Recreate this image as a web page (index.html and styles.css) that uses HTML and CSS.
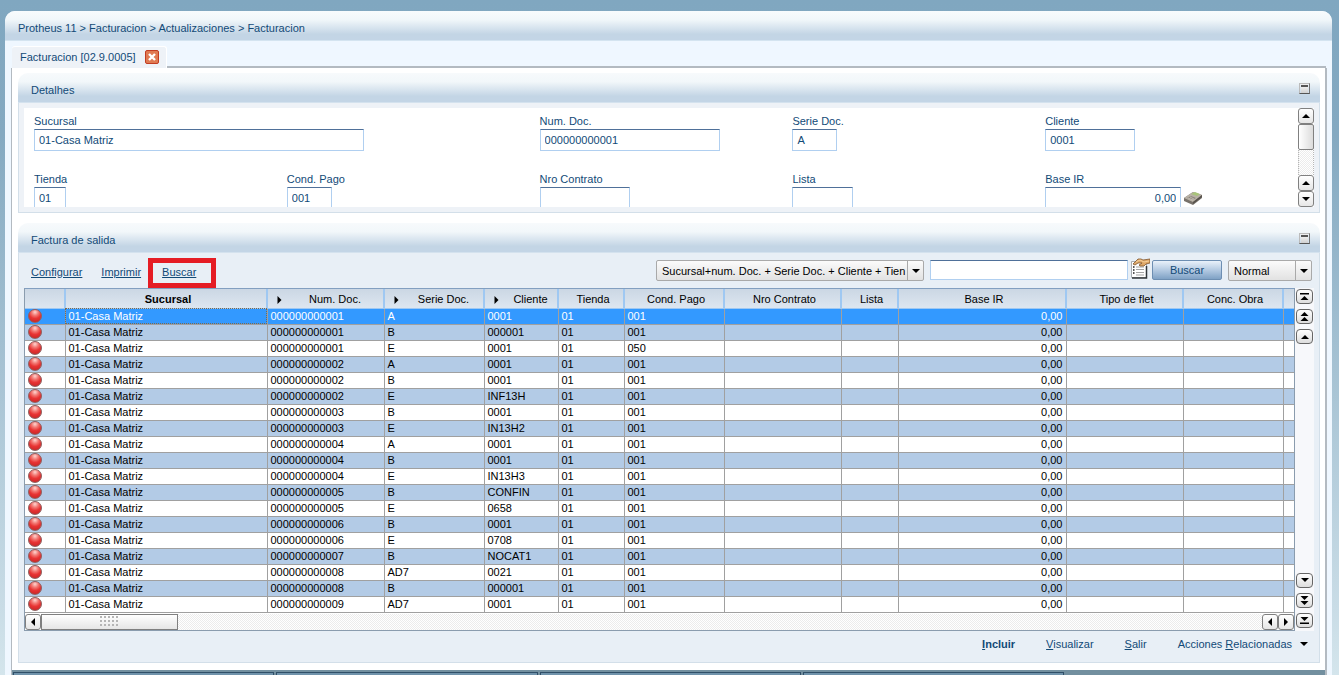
FILE: index.html
```
<!DOCTYPE html>
<html lang="es">
<head>
<meta charset="utf-8">
<title>Protheus 11 - Facturacion</title>
<link rel="stylesheet" href="styles.css">
</head>
<body>
<svg class="defs" aria-hidden="true">
  <symbol id="up" viewBox="0 0 8 4"><path d="M4 0L8 4H0z"/></symbol>
  <symbol id="down" viewBox="0 0 8 4"><path d="M0 0h8L4 4z"/></symbol>
  <symbol id="left" viewBox="0 0 4 8"><path d="M4 0v8L0 4z"/></symbol>
  <symbol id="right" viewBox="0 0 4 8"><path d="M0 0l4 4-4 4z"/></symbol>
</svg>
<div class="window">
  <header class="titlebar">Protheus 11 &gt; Facturacion &gt; Actualizaciones &gt; Facturacion</header>
  <div class="tabs">
    <div class="tab"><span>Facturacion [02.9.0005]</span>
      <button class="close" aria-label="Cerrar"><svg width="8" height="8" viewBox="0 0 8 8"><path d="M1 1l6 6M7 1L1 7" stroke="#fff" stroke-width="2.4"/></svg></button>
    </div>
    <div class="tab-line"></div>
  </div>
  <main class="content">
    <section class="panel">
      <div class="panel-head"><h2>Detalhes</h2><button class="minimize" aria-label="Minimizar"></button></div>
      <div class="panel-body">
        <div class="details">
          <form class="fields">
            <div class="field wide"><label for="sucursal">Sucursal</label><input id="sucursal" class="w330" value="01-Casa Matriz"></div>
            <div class="field"><label for="numdoc">Num. Doc.</label><input id="numdoc" class="w180" value="000000000001"></div>
            <div class="field"><label for="serie">Serie Doc.</label><input id="serie" class="w45" value="A"></div>
            <div class="field"><label for="cliente">Cliente</label><input id="cliente" class="w90" value="0001"></div>
            <div class="field"><label for="tienda">Tienda</label><input id="tienda" class="w32" value="01"></div>
            <div class="field"><label for="pago">Cond. Pago</label><input id="pago" class="w45" value="001"></div>
            <div class="field"><label for="contrato">Nro Contrato</label><input id="contrato" class="w90"></div>
            <div class="field"><label for="lista">Lista</label><input id="lista" class="w61"></div>
            <div class="field"><label for="base">Base IR</label>
              <div class="with-icon"><input id="base" class="w136" value="0,00">
                <svg width="18" height="14" viewBox="0 0 18 14"><path d="M0 7l9-6 9 3v3l-9 7-9-4z" fill="#77716a"/><path d="M0 7l9-6 9 3-9 7z" fill="#b9b2a6"/><path d="M7 3l4-2 5 2-3 2z" fill="#a8c47a"/><path d="M3 7l4-2 5 2-4 2z" fill="#8d867c"/><path d="M4 7l5 2M6 6l4 2" stroke="#d5cfc5" stroke-width=".7"/><path d="M9 11l9-7v2l-9 7z" fill="#57524c"/></svg>
              </div>
            </div>
          </form>
          <div class="vscroll">
            <button class="sb" aria-label="Subir"><svg width="8" height="4"><use href="#up"/></svg></button>
            <div class="thumb-v"></div>
            <div class="track-v"></div>
            <button class="sb" aria-label="Subir linea"><svg width="8" height="4"><use href="#up"/></svg></button>
            <button class="sb" aria-label="Bajar"><svg width="8" height="4"><use href="#down"/></svg></button>
          </div>
        </div>
      </div>
    </section>

    <section class="panel">
      <div class="panel-head"><h2>Factura de salida</h2><button class="minimize" aria-label="Minimizar"></button></div>
      <div class="panel-body tinted">
        <div class="toolbar">
          <nav class="links">
            <a href="#">Configurar</a>
            <a href="#">Imprimir</a>
            <a href="#" class="marked">Buscar</a>
          </nav>
          <div class="search">
            <div class="combo combo-key"><select aria-label="Indice"><option>Sucursal+num. Doc. + Serie Doc. + Cliente + Tien</option></select><span class="combo-arrow"><svg width="8" height="4"><use href="#down"/></svg></span></div>
            <input class="query" aria-label="Texto de busqueda">
            <button class="pick" aria-label="Opciones"><svg width="20" height="21" viewBox="0 0 20 21"><path d="M1.500 3.500h15v16h-15z" fill="#fff" stroke="#a8acb0"/><path d="M16.500 8v12H2" fill="none" stroke="#30363a" stroke-width="1.500"/><path d="M6 9h8M6 11.500h8M6 14.500h8M6 17h8" stroke="#a3a3a3"/><path d="M3 9h1.500M3 12h1.500M3 15h1.500" stroke="#222" stroke-width="1.500"/><path d="M3 6l5-5 3 0 2 1 7-1v4l-4 1-2 2-4 0-1-1 3-2-4 0-3 2z" fill="#dda768" stroke="#80562f" stroke-width=".8"/><path d="M6 4l4-2 4 2 5-1" fill="none" stroke="#f5cf9a"/></svg></button>
            <button class="go">Buscar</button>
            <div class="combo combo-mode"><select aria-label="Modo"><option>Normal</option></select><span class="combo-arrow"><svg width="8" height="4"><use href="#down"/></svg></span></div>
          </div>
        </div>

        <div class="browse">
          <div class="grid">
            <table>
              <colgroup><col class="c40"><col class="c202"><col class="c117"><col class="c100"><col class="c74"><col class="c66"><col class="c100"><col class="c117"><col class="c57"><col class="c168"><col class="c117"><col class="c100"><col></colgroup>
              <thead><tr>
                <th></th><th class="strong">Sucursal</th>
                <th class="sort"><svg width="5" height="8"><use href="#right"/></svg>Num. Doc.</th>
                <th class="sort"><svg width="5" height="8"><use href="#right"/></svg>Serie Doc.</th>
                <th class="sort"><svg width="5" height="8"><use href="#right"/></svg>Cliente</th>
                <th>Tienda</th><th>Cond. Pago</th><th>Nro Contrato</th><th>Lista</th><th>Base IR</th><th>Tipo de flet</th><th>Conc. Obra</th><th></th>
              </tr></thead>
              <tbody id="rows"></tbody>
            </table>
            <div class="hscroll">
              <button class="sb" aria-label="Izquierda"><svg width="4" height="8"><use href="#left"/></svg></button>
              <div class="thumb-h"><i class="grip"></i></div>
              <div class="track-h"></div>
              <button class="sb" aria-label="Columna anterior"><svg width="4" height="8"><use href="#left"/></svg></button>
              <button class="sb" aria-label="Columna siguiente"><svg width="4" height="8"><use href="#right"/></svg></button>
            </div>
          </div>
          <div class="pager">
            <button aria-label="Primero"><svg width="9" height="8" viewBox="0 0 9 8"><path d="M0 0h9v1.500H0zM4.500 3L8.500 7h-8z"/></svg></button>
            <button aria-label="Pagina anterior"><svg width="9" height="9" viewBox="0 0 9 9"><path d="M4.500 0l4 4h-8zM4.500 5l4 4h-8z"/></svg></button>
            <button aria-label="Anterior"><svg width="8" height="4"><use href="#up"/></svg></button>
            <span class="spacer"></span>
            <button aria-label="Siguiente"><svg width="8" height="4"><use href="#down"/></svg></button>
            <button aria-label="Pagina siguiente"><svg width="9" height="9" viewBox="0 0 9 9"><path d="M.5 0h8l-4 4zM.5 5h8l-4 4z"/></svg></button>
            <button aria-label="Ultimo"><svg width="9" height="8" viewBox="0 0 9 8"><path d="M.5 1h8l-4 4zM0 6.500h9V8H0z"/></svg></button>
          </div>
        </div>

        <div class="actions">
          <a href="#"><b><u>I</u>ncluir</b></a>
          <a href="#"><u>V</u>isualizar</a>
          <a href="#"><u>S</u>alir</a>
          <a href="#" class="menu"><span>Acciones <u>R</u>elacionadas</span><svg width="8" height="4"><use href="#down"/></svg></a>
        </div>
      </div>
    </section>
    <div class="taskbar"><span></span><span></span><span></span><span></span></div>
  </main>
</div>
<script src="rows.js"></script>
</body>
</html>
```
FILE: styles.css
```
* { box-sizing: border-box; }
body {
  margin: 0;
  height: 100vh;
  overflow: hidden;
  padding: 11px 7px 0 5px;
  font: 11px/14px "Liberation Sans", Arial, sans-serif;
  color: #124a77;
  background: linear-gradient(#80a7c0 0, #84a9c1 20%, #c9dce6 90%, #d4e5ec);
}
input, select, button { font: inherit; color: inherit; margin: 0; }
button { display: flex; align-items: center; justify-content: center; padding: 0; }
a { color: inherit; }
h2 { margin: 0; font-size: 11px; font-weight: normal; }
svg { display: block; flex: none; }
.defs { position: absolute; width: 0; height: 0; }

.window {
  height: 100%;
  display: flex;
  flex-direction: column;
  border-radius: 10px 10px 0 0;
  background: #eff7ff;
  overflow: hidden;
}
.titlebar {
  height: 30px;
  padding: 10px 13px 0;
  background: linear-gradient(#f8fbfd, #f1f7fa 30%, #c3d5e5 80%, #c3d5e6);
  border-bottom: 1px solid #d4e4f0;
}
.tabs { display: flex; align-items: flex-end; height: 27px; padding: 0 6px 0 7px; }
.tab {
  display: flex;
  align-items: center;
  gap: 9px;
  height: 22px;
  padding: 0 7px 2px 8px;
  background: #eef2f7;
  border-top: 1px solid #fff;
  border-right: 1px solid #fff;
  border-radius: 3px 3px 0 0;
}
.tab-line { flex: 1; height: 2px; background: #b3bac1; }
.close { width: 14px; height: 14px; border: 1px solid #c23d22; border-radius: 2px; background: #e07a52; }

.content {
  flex: 1;
  display: flex;
  flex-direction: column;
  margin: 0 5px 0 6px;
  padding: 5px 5px 0 6px;
  border: solid #b3bac1;
  border-width: 0 2px 0 1px;
  background: #fff;
}
.panel { margin-bottom: 10px; }
.panel-head {
  display: flex;
  justify-content: space-between;
  height: 30px;
  padding: 10px 10px 0 13px;
  border-radius: 10px 10px 0 0;
  background: linear-gradient(#f7fafc, #f2f7fa 30%, #c3d5e5 80%, #c3d5e6);
  border-bottom: 1px solid #d4e2ee;
}
.minimize { width: 11px; height: 11px; border: 1px solid #bbb; border-right-color: #777; border-bottom-color: #555; background: linear-gradient(#eee 1px, #555 1px, #555 3px, #eee 3px, #d0d0d0); background-clip: content-box; padding: 0 1px; }
.panel-body { padding: 5px; border: 1px solid #d3dfe9; border-top: 0; background: #eef2f7; }
.panel-body.tinted { background: #e8eff6; }

.details { display: flex; height: 99px; overflow: hidden; background: #fff; }
.fields { flex: 1; display: grid; grid-template-columns: repeat(5, 1fr); grid-auto-rows: 58px; padding: 6px 0 0 10px; }
.field { display: flex; flex-direction: column; align-items: flex-start; gap: 1px; }
.field.wide { grid-column: span 2; }
.field input, .query {
  height: 22px;
  padding: 0 4px;
  border: 1px solid #b0cff0;
  border-top-color: #4f7099;
  background: #fff;
  outline: 0;
}
.w330 { width: 330px; } .w180 { width: 180px; } .field .w136 { width: 136px; text-align: right; }
.w90 { width: 90px; } .w61 { width: 61px; } .w45 { width: 45px; } .w32 { width: 32px; }
.with-icon { display: flex; align-items: center; gap: 3px; }

.sb, .thumb-v, .thumb-h {
  flex: none;
  border: 1px solid #808080;
  background: linear-gradient(#fff, #e6e6e6);
}
.sb { width: 16px; height: 16px; border-radius: 3px; color: #000; }
.vscroll { display: flex; flex-direction: column; width: 16px; }
.thumb-v { height: 26px; border-radius: 2px; background: linear-gradient(90deg, #fff, #dcdcdc); }
.track-v, .track-h { flex: 1; background: repeating-conic-gradient(#fff 0 25%, #ececec 0 50%) 0 0 / 2px 2px; }
.track-v { border: dotted #b5b5b5; border-width: 0 1px; }

.toolbar { display: flex; justify-content: space-between; height: 30px; padding: 2px 2px 0 7px; }
.links { display: flex; align-items: flex-start; gap: 19px; padding-top: 5px; }
.marked { position: relative; margin-left: 2px; }
.marked::after { content: ""; position: absolute; inset: -7px -20px -9px -14px; border: 5px solid #e51c24; }
.search { display: flex; align-items: flex-start; gap: 6px; }
.combo { display: flex; height: 21px; border: 1px solid #a9a9a9; border-radius: 2px; background: linear-gradient(#fbfbfb, #e2e2e2); color: #000; }
.combo select { flex: 1; min-width: 0; appearance: none; border: 0; padding: 0 0 0 5px; background: none; outline: 0; }
.combo-key { width: 268px; }
.combo-mode { width: 84px; }
.combo-arrow { display: flex; align-items: center; justify-content: center; width: 16px; border-left: 1px solid #a9a9a9; }
.search .query { width: 198px; height: 20px; }
.pick { width: 20px; height: 21px; margin: -2px -4px 0; border: 0; background: none; }
.go { width: 70px; height: 20px; border: 1px solid #6d8eb2; border-radius: 2px; background: linear-gradient(#e9f1fa, #b4cae2 50%, #7fa1c5); }

.browse { display: flex; }
.grid { flex: 1; min-width: 0; border: 1px solid #8a9cae; border-top-color: #829fc0; background: #fff; }
table { width: 100%; table-layout: fixed; border-collapse: collapse; color: #000; }
.c40 { width: 40px; } .c202 { width: 202px; } .c117 { width: 117px; } .c100 { width: 100px; } .c74 { width: 74px; }
.c66 { width: 66px; } .c57 { width: 57px; } .c168 { width: 168px; }
th, td { padding: 0 3px 1px; white-space: nowrap; overflow: hidden; }
th { height: 19px; padding: 1px 3px 0 7px; font-weight: normal; border-right: 2px solid #9fc8f2; border-bottom: 1px solid #9fc8f2; background: linear-gradient(#cbd7e4, #dde6f0); }
th:last-child { border-right: 0; }
th.strong { font-weight: bold; }
th.sort { position: relative; padding-left: 22px; }
th.sort svg { position: absolute; left: 9px; top: 7px; width: 5px; }
td { height: 16px; line-height: 14px; border-right: 1px solid #a0a0a0; border-bottom: 1px solid #a0a0a0; }
td:first-child { padding: 0 3px; }
td:last-child { border-right: 0; }
td.num { text-align: right; }
tbody tr:nth-child(even) { background: #b3cbe6; }
tbody tr.selected { background: #3399ff; color: #fff; }
.selected td:nth-child(2) { outline: 1px dotted #7a6a50; outline-offset: -1px; }
.ball { display: block; width: 14px; height: 14px; border: 1px solid #8d6464; border-radius: 50%; background: radial-gradient(circle at 50% 18%, #ffd5d0 0, #f27570 30%, #e83434 55%, #d22a2a 80%, #a32424); }

.hscroll { display: flex; height: 17px; padding-top: 1px; }
.thumb-h { display: flex; align-items: center; justify-content: center; width: 137px; }
.grip { width: 19px; height: 11px; background: linear-gradient(#b5b5b5 0 0) 0 0 / 2px 2px no-repeat, conic-gradient(from 270deg at 2px 2px, #b5b5b5 25%, transparent 0) 0 0 / 4px 4px; }
.pager { display: flex; flex-direction: column; gap: 5px; width: 19px; padding: 1px 0 3px 1px; background: #f7f8fb; }
.pager button { width: 17px; height: 15px; border: 1px solid #666; border-radius: 4px; background: linear-gradient(#fff, #ddd); }
.spacer { flex: 1; }

.actions { display: flex; justify-content: flex-end; gap: 31px; height: 26px; padding: 6px 6px 0; }
.actions a { text-decoration: none; }
.menu { display: flex; align-items: center; align-self: flex-start; gap: 8px; }
.menu svg { fill: #000; }

.taskbar { flex: 1; display: flex; gap: 2px; margin: -3px -5px 0 -6px; padding: 2px 261px 0 1px; background: #728f9f; }
.taskbar span { flex: 1; border: 1px solid #304f68; border-bottom: 0; background: #7093ab; }
```
FILE: rows.js
```
const invoices = [
  ["01", "A", "0001", "001"], ["01", "B", "000001", "001"], ["01", "E", "0001", "050"],
  ["02", "A", "0001", "001"], ["02", "B", "0001", "001"], ["02", "E", "INF13H", "001"],
  ["03", "B", "0001", "001"], ["03", "E", "IN13H2", "001"], ["04", "A", "0001", "001"],
  ["04", "B", "0001", "001"], ["04", "E", "IN13H3", "001"], ["05", "B", "CONFIN", "001"],
  ["05", "E", "0658", "001"], ["06", "B", "0001", "001"], ["06", "E", "0708", "001"],
  ["07", "B", "NOCAT1", "001"], ["08", "AD7", "0021", "001"], ["08", "B", "000001", "001"],
  ["09", "AD7", "0001", "001"]
];
document.getElementById("rows").innerHTML = invoices.map(([doc, serie, cliente, pago], i) =>
  `<tr${i === 0 ? ' class="selected"' : ""}><td><span class="ball"></span></td><td>01-Casa Matriz</td>` +
  `<td>0000000000${doc}</td><td>${serie}</td><td>${cliente}</td><td>01</td><td>${pago}</td>` +
  `<td></td><td></td><td class="num">0,00</td><td></td><td></td><td></td></tr>`
).join("");
```
